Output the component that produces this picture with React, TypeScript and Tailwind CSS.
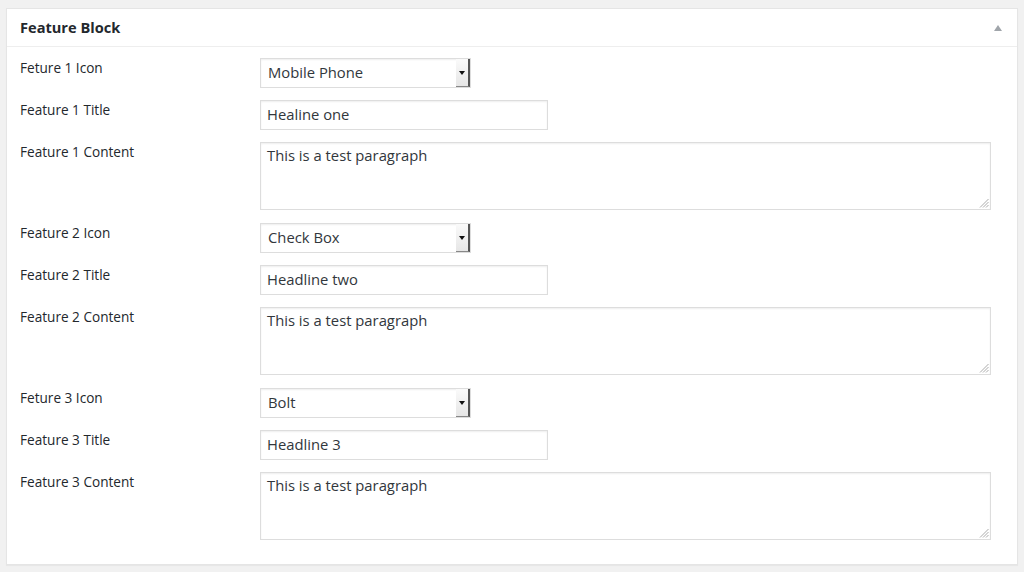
import React from "react";

const font = { fontFamily: '"Open Sans", "Noto Sans", sans-serif' };

function SelectBox({ value }: { value: string }) {
  return (
    <div className="flex h-[30px] w-[211px] border border-[#ddd] bg-white shadow-[inset_0_1px_2px_rgba(0,0,0,0.07)]">
      <div className="flex flex-1 items-center pb-[1px] pl-[7px] text-[14.8px] text-[#32373c]">{value}</div>
      <div className="flex w-[14px] items-center justify-center border-r-2 border-b border-r-[#555] border-b-[#888] bg-gradient-to-b from-[#fafafa] to-[#e6e6e6]">
        <div className="h-0 w-0 border-x-[3px] border-t-[4px] border-x-transparent border-t-[#111]" />
      </div>
    </div>
  );
}

function InputBox({ value }: { value: string }) {
  return (
    <div className="flex h-[30px] w-[288px] items-center border border-[#ddd] bg-white pb-[1px] pl-[6px] text-[14.8px] text-[#32373c] shadow-[inset_0_1px_2px_rgba(0,0,0,0.07)]">
      {value}
    </div>
  );
}

function TextAreaBox({ value }: { value: string }) {
  return (
    <div className="relative mb-[1px] h-[68px] w-[731px] border border-[#ddd] bg-white pl-[6px] pt-[2px] text-[14.8px] leading-[20px] text-[#32373c] shadow-[inset_0_1px_2px_rgba(0,0,0,0.07)]">
      {value}
      <svg className="absolute bottom-[1px] right-[1px]" width="10" height="10" viewBox="0 0 10 10">
        <line x1="9.5" y1="1" x2="1" y2="9.5" stroke="#aaa" strokeWidth="1" />
        <line x1="9.5" y1="4" x2="4" y2="9.5" stroke="#aaa" strokeWidth="1" />
        <line x1="9.5" y1="7" x2="7" y2="9.5" stroke="#aaa" strokeWidth="1" />
      </svg>
    </div>
  );
}

function Row({ label, children, pt }: { label: string; children: React.ReactNode; pt: string }) {
  return (
    <div className="flex">
      <div className={`w-[240px] shrink-0 text-[13.6px] leading-[18px] text-[#23282d] ${pt}`}>{label}</div>
      <div>{children}</div>
    </div>
  );
}

const groups = [
  { icon: "Feture 1 Icon", iconVal: "Mobile Phone", title: "Feature 1 Title", titleVal: "Healine one", content: "Feature 1 Content" },
  { icon: "Feature 2 Icon", iconVal: "Check Box", title: "Feature 2 Title", titleVal: "Headline two", content: "Feature 2 Content" },
  { icon: "Feture 3 Icon", iconVal: "Bolt", title: "Feature 3 Title", titleVal: "Headline 3", content: "Feature 3 Content" },
];

export default function App() {
  return (
    <div className="h-[572px] w-[1024px] bg-[#f1f1f1] pl-[6px] pr-[6px] pt-[8px]" style={font}>
      <div className="h-[557px] border border-[#e5e5e5] bg-white shadow-[0_1px_1px_rgba(0,0,0,0.04)]">
        <div className="flex h-[38px] items-center justify-between border-b border-[#eee] pl-[13px] pr-[15px]">
          <span className="text-[14.6px] font-bold text-[#23282d]">Feature Block</span>
          <div className="h-0 w-0 border-x-[4px] border-b-[6px] border-x-transparent border-b-[#a0a5aa]" />
        </div>
        <div className="flex flex-col gap-[12px] pl-[13px] pt-[11px]">
          {groups.map((g) => (
            <React.Fragment key={g.icon}>
              <Row label={g.icon} pt="pt-[1px]">
                <SelectBox value={g.iconVal} />
              </Row>
              <Row label={g.title} pt="pt-[1px]">
                <InputBox value={g.titleVal} />
              </Row>
              <Row label={g.content} pt="pt-[1px]">
                <TextAreaBox value="This is a test paragraph" />
              </Row>
            </React.Fragment>
          ))}
        </div>
      </div>
    </div>
  );
}
